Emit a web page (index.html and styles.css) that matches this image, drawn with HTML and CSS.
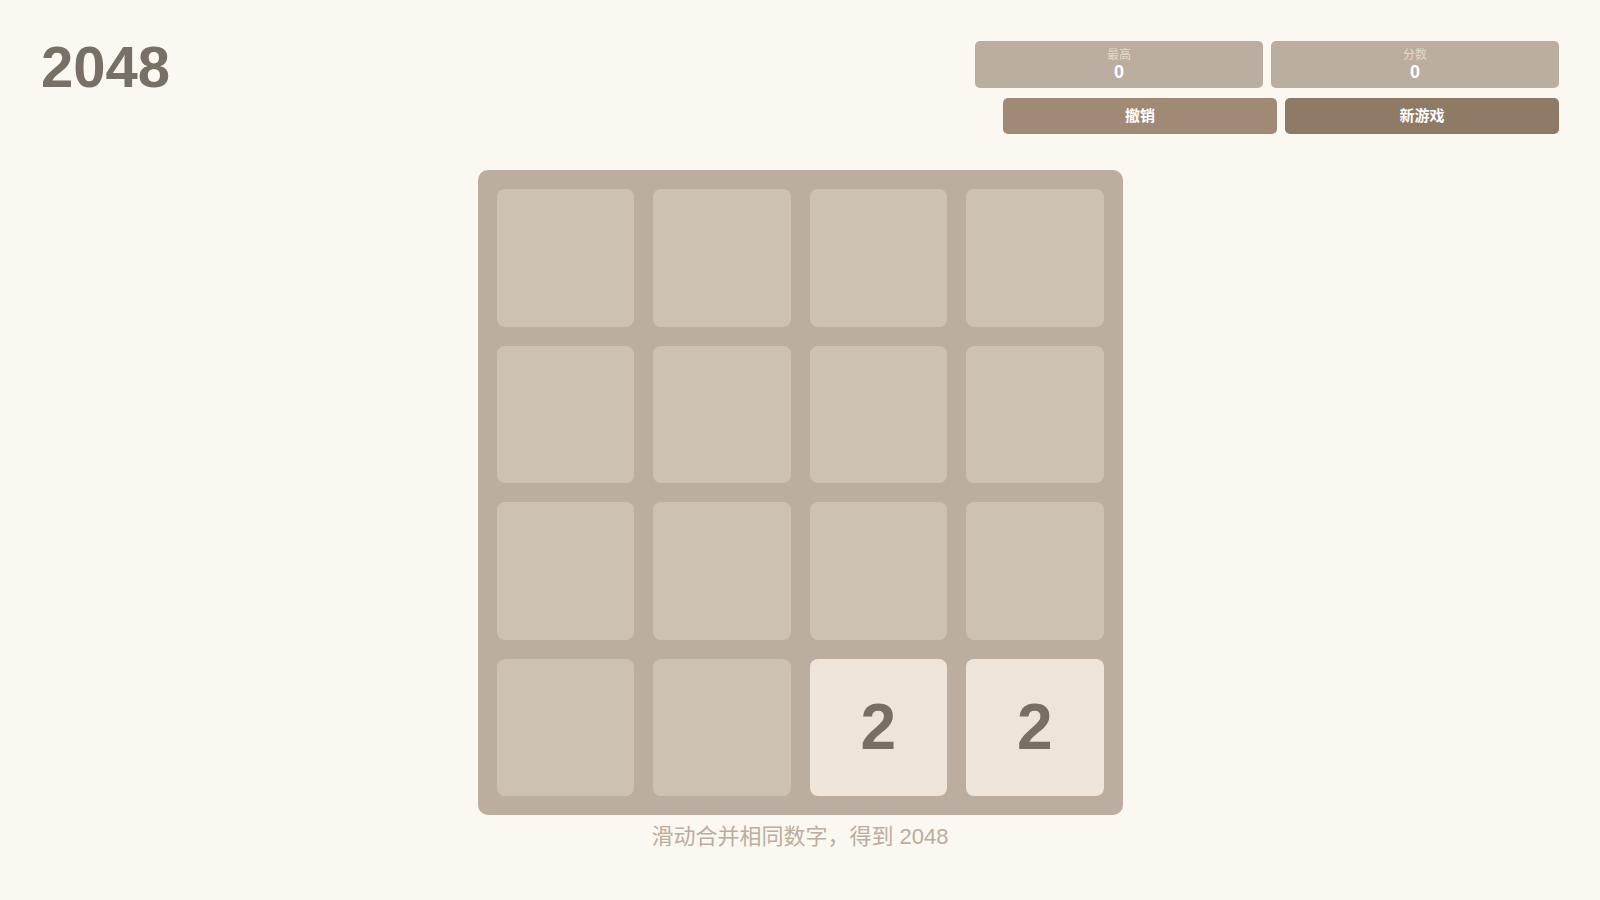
FILE: index.html
```html
<!DOCTYPE html>
<html lang="zh-CN">
  <head>
    <meta charset="UTF-8" />
    <meta name="viewport" content="width=device-width, initial-scale=1.0" />
    <title>2048</title>
    <link rel="stylesheet" href="styles.css">
  </head>
  <body>
    <div class="page">
      <header class="top">
        <h1 class="title">2048</h1>
        <div class="panel">
          <div class="scores">
            <div class="score-box">
              <span class="score-label">最高</span>
              <span class="score-value" id="best">0</span>
            </div>
            <div class="score-box">
              <span class="score-label">分数</span>
              <span class="score-value" id="score">0</span>
            </div>
          </div>
          <div class="actions">
            <button class="btn btn-undo">撤销</button>
            <button class="btn btn-new">新游戏</button>
          </div>
        </div>
      </header>

      <main class="game">
        <div class="board">
          <div class="cell"></div>
          <div class="cell"></div>
          <div class="cell"></div>
          <div class="cell"></div>
          <div class="cell"></div>
          <div class="cell"></div>
          <div class="cell"></div>
          <div class="cell"></div>
          <div class="cell"></div>
          <div class="cell"></div>
          <div class="cell"></div>
          <div class="cell"></div>
          <div class="cell"></div>
          <div class="cell"></div>
          <div class="cell tile-2">2</div>
          <div class="cell tile-2">2</div>
        </div>
        <p class="hint">滑动合并相同数字，得到 2048</p>
      </main>
    </div>
  </body>
</html>
```
FILE: styles.css
```css
* {
  margin: 0;
  padding: 0;
  box-sizing: border-box;
}
body {
  background: #faf8f0;
  font-family: "Liberation Sans", "Noto Sans CJK SC", sans-serif;
  color: #776e65;
}
.page {
  padding: 41px 41px 0;
}
.top {
  display: flex;
  justify-content: space-between;
  align-items: flex-start;
}
.title {
  margin-top: -3px;
  font-size: 58px;
  line-height: 1;
  font-weight: bold;
  color: #786f66;
}
.panel {
  display: flex;
  flex-direction: column;
  align-items: flex-end;
  gap: 10px;
}
.scores {
  display: flex;
  gap: 8px;
}
.score-box {
  width: 288px;
  height: 47px;
  padding-top: 7px;
  display: flex;
  flex-direction: column;
  align-items: center;
  background: #bbada0;
  border-radius: 5px;
}
.score-label {
  font-size: 12px;
  line-height: 15px;
  color: #e3d9cd;
}
.score-value {
  font-size: 18px;
  line-height: 19px;
  font-weight: bold;
  color: #fff;
}
.actions {
  display: flex;
  gap: 8px;
}
.btn {
  width: 274px;
  height: 36px;
  padding-bottom: 3px;
  border: none;
  border-radius: 5px;
  font-family: "Liberation Sans", "Noto Sans CJK SC", sans-serif;
  font-size: 15px;
  font-weight: bold;
  color: #fff;
  cursor: pointer;
}
.btn-undo {
  background: #a08a76;
}
.btn-new {
  background: #8f7a66;
}
.game {
  margin-top: 36px;
  display: flex;
  flex-direction: column;
  align-items: center;
}
.board {
  width: 645px;
  height: 645px;
  padding: 19px;
  display: grid;
  grid-template-columns: repeat(4, 1fr);
  grid-template-rows: repeat(4, 1fr);
  gap: 19px;
  background: #bbada0;
  border-radius: 10px;
}
.cell {
  border-radius: 8px;
  background: #cdc1b4;
  display: flex;
  align-items: center;
  justify-content: center;
  font-size: 64px;
  font-weight: bold;
  color: #776e65;
}
.tile-2 {
  background: #eee4da;
}
.hint {
  margin-top: 9px;
  font-size: 22px;
  line-height: 26px;
  color: #bbada0;
}
```
